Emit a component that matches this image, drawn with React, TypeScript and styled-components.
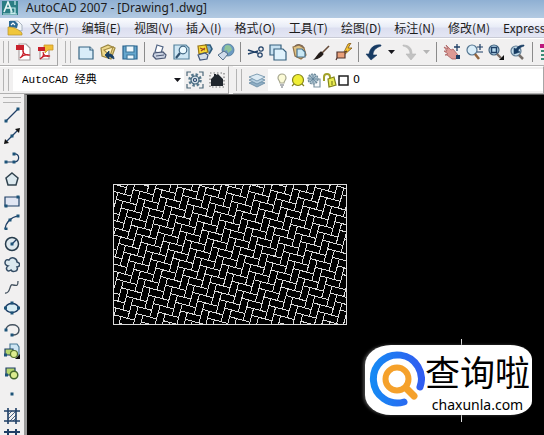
import React from 'react';
import styled, { createGlobalStyle } from 'styled-components';

const GlobalStyle = createGlobalStyle`
  * { box-sizing: border-box; }
  body { margin: 0; background: #000; }
  button, select { font: inherit; color: inherit; }
`;

const Window = styled.div`
  display: flex;
  flex-direction: column;
  height: 100vh;
  overflow: hidden;
  color: #1c1c1c;
  font: 12px/18px "Open Sans", "Noto Sans CJK SC", sans-serif;
`;

const TitleBar = styled.header`
  display: flex;
  align-items: center;
  gap: 8px;
  flex: none;
  height: 18px;
  padding-left: 2px;
  background: linear-gradient(#8fb0d3, #b3cae2);
  white-space: nowrap;
`;

const Title = styled.h1`
  margin: 0;
  padding-bottom: 2px;
  font: 400 12px/16px "Noto Sans", sans-serif;
`;

const MenuBar = styled.nav`
  display: flex;
  align-items: center;
  gap: 13px;
  flex: none;
  height: 20px;
  padding-left: 7px;
  background: linear-gradient(#fbfcfe, #e9edf7 45%, #dcdff0 55%, #e4e6f4);
  border-bottom: 1px solid #c9cbd6;
  overflow: hidden;
`;

const MenuItem = styled.button`
  flex: none;
  padding: 0;
  border: 0;
  background: none;
  font: 12px/18px "Noto Sans CJK SC", sans-serif;
  white-space: nowrap;
`;

const MenuLogo = styled.span`
  display: flex;
  flex: none;
  margin-right: -6px;
`;

const ToolRow = styled.div`
  display: flex;
  flex: none;
  gap: 4px;
  height: 28px;
  background: #f1f0f0;
  overflow: hidden;
`;

const Toolbar = styled.div<{ $grow?: boolean }>`
  display: flex;
  align-items: center;
  flex: ${p => (p.$grow ? '1 0 auto' : 'none')};
  border-right: 1px solid #a6a6a6;
  border-bottom: 1px solid #b0b0b0;
  border-top: 1px solid #fff;
`;

const Grip = styled.span<{ $across?: boolean }>`
  flex: none;
  align-self: ${p => (p.$across ? 'center' : 'stretch')};
  width: ${p => (p.$across ? '18px' : '6px')};
  height: ${p => (p.$across ? '6px' : 'auto')};
  margin: ${p => (p.$across ? '3px 0 4px' : '2px 4px 2px 3px')};
  border: 1px solid #b4b4b4;
  border-width: ${p => (p.$across ? '1px 0' : '0 1px')};
`;

const Separator = styled.span`
  flex: none;
  width: 1px;
  height: 20px;
  margin: 0 4px 0 3px;
  background: #8b8b8b;
`;

const ToolButton = styled.button<{ $narrow?: boolean }>`
  display: flex;
  align-items: center;
  justify-content: center;
  flex: none;
  width: ${p => (p.$narrow ? '13px' : '22px')};
  height: 22px;
  padding: 0;
  border: 0;
  background: none;
`;

const WorkspaceField = styled.label`
  position: relative;
  display: flex;
  align-items: center;
  width: 171px;
  height: 22px;
  background: #fff;
  svg { position: absolute; right: 3px; pointer-events: none; }
`;

const PlainSelect = styled.select<{ $mono?: boolean }>`
  appearance: none;
  flex: 1;
  width: 100%;
  height: 22px;
  padding: 0 0 0 ${p => (p.$mono ? '9px' : '4px')};
  border: 0;
  background: none;
  color: #000;
  font: 11px/20px ${p => (p.$mono ? '"Liberation Mono"' : '"DejaVu Sans"')}, "Noto Sans CJK SC", monospace;
`;

const LayerField = styled.div`
  display: flex;
  align-items: center;
  flex: 1;
  height: 22px;
  min-width: 265px;
  padding-left: 6px;
  background: #fff;
  svg { flex: none; }
`;

const Workspace = styled.main`
  display: flex;
  flex: 1;
  min-height: 0;
`;

const DrawTools = styled.nav`
  display: flex;
  flex-direction: column;
  align-items: center;
  flex: none;
  width: 24px;
  background: #f1f0f0;
  overflow: hidden;
`;

const DrawTool = styled.button`
  display: flex;
  flex: none;
  padding: 0;
  border: 0;
  margin-bottom: 5px;
  background: none;
  &:nth-of-type(even) { margin-bottom: 6px; }
`;

const Canvas = styled.section`
  position: relative;
  flex: 1;
  border-left: 3px solid #9a9a9a;
  border-top: 1px solid #555;
  background: #000;
  overflow: hidden;
`;

const Hatch = styled.svg`
  position: absolute;
  left: 86px;
  top: 89px;
`;

const Crosshair = styled.span`
  position: absolute;
  right: 82px;
  bottom: 13px;
  width: 1px;
  height: 83px;
  background: #ddd;
`;

const Brand = styled.div`
  position: absolute;
  right: 12px;
  bottom: 20px;
  display: flex;
  align-items: center;
  width: 167px;
  height: 70px;
  padding-left: 4px;
  background: #fff;
  border-radius: 26px 22px 22px 26px / 20px 14px 14px 20px;
  box-shadow: -2px 0 3px #444;
  color: #000;
`;

const BrandText = styled.div`
  display: flex;
  flex-direction: column;
  align-items: center;
`;

const BrandName = styled.strong`
  font: 400 35px/50px "Noto Sans CJK SC", sans-serif;
  white-space: nowrap;
`;

const BrandSite = styled.a`
  color: #000;
  font: 14px/18px "Noto Sans", sans-serif;
  text-decoration: none;
`;

const Svg = ({ children, size = 18 }: { children: React.ReactNode; size?: number }) => (
  <svg width={size} height={size} viewBox={`0 0 ${size} ${size}`} fill="none" stroke="#1f3f66" strokeWidth="1.2" aria-hidden="true">
    {children}
  </svg>
);

const icons: Record<string, React.ReactNode> = {
  pdf: <><path d="M4 1h7l4 4v12H4z" fill="#fff" stroke="#a9a0a0" /><path d="M1 2h8v5H1z" fill="#c8202b" stroke="none" /><path d="M5 15c3-2 4-6 3-8-1 3 3 6 7 5-4-1-8 1-10 3z" stroke="#c8202b" /></>,
  pdfNote: <><path d="M3 5h9v11H3z" fill="#fff" stroke="#a9a0a0" /><path d="M7 2h9v5h-5l-3 3V7H7z" fill="#f0bf35" stroke="#c9942a" strokeWidth=".8" /><path d="M1 4h7v4H1z" fill="#c8202b" stroke="none" /><path d="M3 16c3-2 4-5 3-7 0 3 3 5 7 4-4-1-8 1-10 3z" stroke="#c8202b" /></>,
  create: <><path d="M2 4h11l3 3v9H2z" fill="#d9edf9" stroke="#376583" /><path d="M13 4v3h3" fill="#fff" stroke="#376583" /></>,
  open: <><path d="M2 5l7-3 7 3-4 11-9-3z" fill="#eed98b" stroke="#9b8741" /><path d="M5 7l9-3-3 9z" fill="#fff4bf" stroke="#a78e45" /><path d="M15 16c0-3-2-5-5-5V8l-4 4 4 4v-3z" fill="#163e63" stroke="#163e63" strokeWidth=".8" /></>,
  save: <><path d="M2 3h14v13H2z" fill="#65a7ce" stroke="#28618b" /><path d="M5 3h8v6H5zM6 12h7v4H6z" fill="#eef8fd" stroke="#3f789c" /></>,
  print: <><path d="M6 2l6 2-2 6-6-1z" fill="#fff" stroke="#526685" /><path d="M3 10l9-1 3 3-1 3-9 1-3-3z" fill="#cbd3e3" stroke="#4c5975" /><path d="M5 13l8-1" stroke="#4c5975" /></>,
  preview: <><path d="M1 2h12l3 3v11H1z" fill="#cee7f4" stroke="#54829c" /><circle cx="10" cy="7" r="3.8" fill="#ecfaff" stroke="#426985" /><path d="M7 10l-4 5" stroke="#315370" strokeWidth="2.2" /></>,
  publish: <><path d="M10 2l5 0 2 4-3 5" fill="#7aaccb" stroke="#315c7c" strokeWidth="1.6" /><path d="M3 3l8-1 2 7-9 2z" fill="#f8db36" stroke="#987414" /><path d="M5 5l5 2M6 8l4-3" stroke="#a2481f" /><path d="M3 12l7-2 3 2-1 4-7 1z" fill="#d4deea" stroke="#40577b" /></>,
  globe: <><circle cx="11" cy="7" r="6" fill="#6c9ac3" stroke="#4b7697" strokeWidth=".8" /><path d="M8 3c4-3 7 1 7 4l-4 3-1-3-3 1z" fill="#8fc39a" stroke="none" /><path d="M1 12l6-4 4 3-5 6z" fill="#d0dceb" stroke="#4a657f" strokeWidth=".9" /></>,
  cut: <><path d="M1 7l10 3M1 11l10-3" strokeWidth="1.4" /><circle cx="14" cy="6" r="2.2" /><circle cx="13" cy="12" r="2.2" /></>,
  copy: <><path d="M1 2h11v10H1z" fill="#c7e1f1" stroke="#37617e" /><path d="M5 6h9l3 3v8H5z" fill="#dff2fc" stroke="#37617e" /></>,
  paste: <><path d="M2 4l6-2 5 3 2 7-5 4-6-3z" fill="#dfc283" stroke="#94744a" /><path d="M6 6h5l3 3v5H6z" fill="#cae9f5" stroke="#47718e" /><path d="M4 3c3-2 7-2 9 2" stroke="#7b6654" /></>,
  brush: <><path d="M16 3L8 11" stroke="#664b3a" strokeWidth="1.6" /><path d="M8 9l2 2c-2 3-4 4-8 5 2-2 3-5 6-7z" fill="#231c1a" stroke="#231c1a" /></>,
  match: <><path d="M9 9l4-8 3-1-3 5h4l-8 7z" fill="#f5c52f" stroke="#805517" strokeWidth=".8" /><path d="M2 9h8v6H2z" fill="#e99f79" stroke="#51342d" /><path d="M2 15l-1 2M10 9l2-1" stroke="#51342d" /></>,
  undo: <path d="M16 2C9 1 5 5 4 11H1l5 6 6-5H8c0-4 2-7 8-9z" fill="#173b63" stroke="#173b63" strokeWidth=".6" />,
  redo: <path d="M3 2c6 0 9 3 9 9h4l-5 6-5-6h4c0-4-2-7-7-8z" fill="#c2c2c2" stroke="#b7b7b7" strokeWidth=".6" />,
  pan: <><path d="M3 2l5 5 2-1 5 6-2 4H9l-5-4H2l3-1-4-3 3 0-3-4 4 2z" fill="#dd9a95" stroke="#a96161" strokeWidth=".8" /><path d="M14 1v7M11 4h6" strokeWidth="1.3" /><path d="M13 12h4v4h-4z" fill="#1f3f66" stroke="none" /></>,
  zoom: <><circle cx="7" cy="7" r="5" fill="#d9edf9" stroke="#557691" /><path d="M10 11l4 5" stroke="#92653e" strokeWidth="2.5" /><path d="M15 1v6M12 4h6M12 9h6" /></>,
  zoomWindow: <><circle cx="7" cy="7" r="5" fill="#b9dbee" stroke="#40617e" /><path d="M4.5 4.5h5v5h-5z" strokeWidth="1.5" /><path d="M10 11l4 4" stroke="#7a6c64" strokeWidth="2.3" /><path d="M17 12v5h-5z" fill="#111" stroke="none" /></>,
  zoomPrevious: <><circle cx="7" cy="8" r="5" fill="#c4ddeb" stroke="#617d95" /><path d="M10 12l4 4" stroke="#766e69" strokeWidth="2.5" /><path d="M15 2c-4 0-6 1-8 4L5 5v6l6-2-2-1c1-3 3-4 6-5z" fill="#163b62" stroke="#163b62" strokeWidth=".6" /></>,
  properties: <><path d="M1 1h16v4H1z" fill="#bd187b" stroke="none" /><path d="M2 8h14M2 12h14M2 16h14" stroke="#3c8b75" strokeWidth="2" /></>,
  gear: <><path d="M1 5V1h4M13 1h4v4M17 13v4h-4M5 17H1v-4" stroke="#4c687a" /><circle cx="9" cy="9" r="5.5" stroke="#57798d" strokeWidth="2.5" strokeDasharray="2.4 1.9" /><circle cx="9" cy="9" r="4" fill="#d6e1e8" stroke="#3d6077" /><circle cx="9" cy="9" r="1.5" fill="#fff" /></>,
  home: <><path d="M2 2h14v14H2z" stroke="#777" strokeDasharray="1.5 2" /><path d="M3 8l3-3V3h2v1l2-1 5 5v7H3z" fill="#20262d" stroke="none" /></>,
  layers: <><path d="M1 12l8-3 8 3-8 4z" fill="#8fadc3" stroke="#668aa3" strokeWidth=".8" /><path d="M1 9l8-3 8 3-8 4z" fill="#b7cfe0" stroke="#668aa3" strokeWidth=".8" /><path d="M1 6l8-3 8 3-8 4z" fill="#dceaf3" stroke="#668aa3" strokeWidth=".8" /></>,
  bulb: <><path d="M6 11c0-2-2-3-2-5a4 4 0 018 0c0 2-2 3-2 5z" fill="#fbfad6" stroke="#a6a68d" /><path d="M6 13h4M7 15h2" stroke="#666d75" /></>,
  sun: <><circle cx="8" cy="8" r="5.5" fill="#f0ee35" stroke="#85851e" /><path d="M2 14l2-2M14 14l-2-2" stroke="#85851e" /></>,
  freeze: <><path d="M8 7h6v8H8z" fill="#f6f9fb" stroke="#7e95a3" /><circle cx="7" cy="7" r="5" fill="#a9bfcc" stroke="#6b8798" strokeDasharray="2 1" /><path d="M7 3v8M3 7h8M4 4l6 6M10 4l-6 6" stroke="#5b7e95" strokeWidth=".7" /></>,
  lock: <><path d="M2 9V5a3 3 0 016 0v5" stroke="#a2a22a" strokeWidth="2" /><path d="M6 7l6-2 2 8-7 2z" fill="#e9ec52" stroke="#838520" /><path d="M10 9v4" stroke="#838520" /></>,
};

const dot = (x: number, y: number) => <rect x={x - 1.5} y={y - 1.5} width="3" height="3" fill="#1d5378" stroke="none" />;

const drawTools: [string, React.ReactNode][] = [
  ['Line', <><path d="M2 14L14 2" />{dot(2, 14)}{dot(14, 2)}</>],
  ['Construction line', <><path d="M2 14L14 2" /><path d="M0 16l1-5 4 4zM16 0l-1 5-4-4z" fill="#111" stroke="none" />{dot(8, 8)}</>],
  ['Polyline', <><path d="M2 12h9M10 4c6-1 6 7 1 8" />{dot(2, 12)}{dot(10, 12)}{dot(10, 4)}</>],
  ['Polygon', <path d="M8 2l6 5-2 7H4L2 7z" fill="#dce9ef" stroke="#30434f" strokeWidth="1.5" />],
  ['Rectangle', <><path d="M1 4h14v9H1z" fill="#e1e6f3" />{dot(2, 13)}{dot(14, 4)}</>],
  ['Arc', <><path d="M1 15C2 8 7 3 14 2" />{dot(2, 15)}{dot(6, 6)}{dot(14, 2)}</>],
  ['Circle', <><circle cx="8" cy="8" r="6.5" fill="#dde8ee" stroke="#263c4c" strokeWidth="1.5" /><path d="M8 8l4-4" />{dot(8, 8)}</>],
  ['Revision cloud', <path d="M4 9C-1 8 1 1 5 3c2-4 8-2 8 2 4 1 3 5 0 5 2 4-4 6-6 3-4 3-6-2-3-4z" fill="#dce9ef" stroke="#344d65" strokeWidth="1.5" />],
  ['Spline', <path d="M1 14c6 1 4-10 8-8 4 1 5 1 5-4" stroke="#44525f" strokeWidth="1.3" />],
  ['Ellipse', <><ellipse cx="8" cy="8" rx="6.5" ry="4.5" fill="#d7edf4" strokeWidth="1.5" />{dot(8, 3)}{dot(1.5, 8)}{dot(14.5, 8)}{dot(8, 13)}</>],
  ['Ellipse arc', <><path d="M2 8c0-7 13-7 13 0 0 4-4 5-6 5" stroke="#44525f" strokeWidth="1.5" />{dot(2, 8)}{dot(8, 13)}</>],
  ['Insert block', <><path d="M6 1h7l2 3v8H6z" fill="#cde5f3" stroke="#4d7d9a" /><path d="M1 6h8v6H1z" fill="#b4d56c" /><circle cx="10" cy="11" r="3.5" fill="#dcec8f" stroke="#56732c" />{dot(1.5, 12)}<path d="M16 11v5h-5z" fill="#111" stroke="none" /></>],
  ['Make block', <><path d="M2 3h9v7H2z" fill="#b4d56c" /><circle cx="10" cy="10" r="3.8" fill="#dcec8f" stroke="#45672d" strokeWidth="1.5" />{dot(2.5, 10)}</>],
  ['Point', dot(8, 8)],
  ['Hatch', <><path d="M4 0v16M12 0v16M0 3h16M0 13h16" strokeWidth="1.6" /><path d="M4 7l4-4M4 11l8-8M6 13l6-6M9 13l3-3" strokeWidth=".8" /></>],
  ['Gradient', <path d="M4 0v16M12 0v16M0 3h16M0 13h16" strokeWidth="2" />],
];

const Tool = ({ name }: { name: string }) => (
  <ToolButton type="button" aria-label={name}><Svg>{icons[name]}</Svg></ToolButton>
);

const DropArrow = ({ faded }: { faded?: boolean }) => (
  <svg width="7" height="4" viewBox="0 0 7 4" aria-hidden="true"><path d="M0 0h7L3.5 4z" fill={faded ? '#b5b5b5' : '#16161c'} /></svg>
);

const Tools = ({ names }: { names: string[] }) => <>{names.map(n => <Tool key={n} name={n} />)}</>;

const menus = ['文件(F)', '编辑(E)', '视图(V)', '插入(I)', '格式(O)', '工具(T)', '绘图(D)', '标注(N)', '修改(M)', 'Express'];

const BRICK = 7;
const REACH = 44;

// One horizontal and one vertical 2:1 brick, repeated on the herringbone lattice (1,1), (2,-2).
const bricks = (() => {
  let path = '';
  for (let y = -REACH; y < REACH; y++) {
    for (let x = -REACH; x < REACH; x++) {
      if ((((x - y) % 4) + 4) % 4 === 0) path += `M${x} ${y + 1}V${y}h2M${x + 2} ${y + 1}v-2h1`;
    }
  }
  return path;
})();

const HerringboneHatch = () => (
  <Hatch width="235" height="142" viewBox="0 0 235 142" role="img" aria-label="Herringbone hatch">
    <clipPath id="hatchArea"><rect width="234" height="141" /></clipPath>
    <g clipPath="url(#hatchArea)">
      <path d={bricks} transform={`rotate(15) scale(${BRICK})`} fill="none" stroke="#dadada" strokeWidth={1 / BRICK} shapeRendering="crispEdges" />
    </g>
    <rect x=".5" y=".5" width="233" height="140" fill="none" stroke="#dcdcdc" />
  </Hatch>
);

export default function App() {
  return (
    <Window>
      <GlobalStyle />
      <TitleBar>
        <Svg size={16}>
          <path d="M0 0h16v14H0z" fill="#2b7d84" stroke="none" />
          <path d="M2 11L6 1l4 10M4 7h4" stroke="#e9f6f5" strokeWidth="1.6" />
          <path d="M9 7h4v5H9zM13 0v4M1 13h14" stroke="#c9eeee" />
        </Svg>
        <Title>AutoCAD 2007 - [Drawing1.dwg]</Title>
      </TitleBar>
      <MenuBar>
        <MenuLogo>
          <Svg size={16}>
            <path d="M3 1h8l4 4v6L3 9z" fill="#f0f4f8" stroke="#8a98a6" strokeWidth=".7" />
            <path d="M2 1h6l3 3-1 4-8-1z" fill="#2c6a94" stroke="none" />
            <path d="M1 7c6 0 10 2 14 6v2H1z" fill="#f0c63c" stroke="#b48f2e" strokeWidth=".7" />
            <path d="M4 5l2-2 2 2" stroke="#fff" />
          </Svg>
        </MenuLogo>
        {menus.map(m => <MenuItem type="button" key={m}>{m}</MenuItem>)}
      </MenuBar>
      <ToolRow>
        <Toolbar>
          <Grip />
          <Tools names={['pdf', 'pdfNote']} />
        </Toolbar>
        <Toolbar $grow>
          <Grip />
          <Tools names={['create', 'open', 'save']} />
          <Separator />
          <Tools names={['print', 'preview', 'publish', 'globe']} />
          <Separator />
          <Tools names={['cut', 'copy', 'paste', 'brush', 'match']} />
          <Separator />
          <Tool name="undo" />
          <ToolButton type="button" $narrow aria-label="Undo list"><DropArrow /></ToolButton>
          <Tool name="redo" />
          <ToolButton type="button" $narrow aria-label="Redo list"><DropArrow faded /></ToolButton>
          <Separator />
          <Tools names={['pan', 'zoom', 'zoomWindow', 'zoomPrevious']} />
          <Separator />
          <Tool name="properties" />
        </Toolbar>
      </ToolRow>
      <ToolRow>
        <Toolbar>
          <Grip />
          <WorkspaceField>
            <PlainSelect $mono aria-label="Workspace"><option>AutoCAD 经典</option></PlainSelect>
            <DropArrow />
          </WorkspaceField>
          <Tools names={['gear', 'home']} />
        </Toolbar>
        <Toolbar $grow>
          <Grip />
          <Tool name="layers" />
          <LayerField>
            <Svg size={16}>{icons.bulb}</Svg>
            <Svg size={16}>{icons.sun}</Svg>
            <Svg size={16}>{icons.freeze}</Svg>
            <Svg size={16}>{icons.lock}</Svg>
            <svg width="11" height="11" viewBox="0 0 11 11" aria-hidden="true"><path d="M1 1h9v9H1z" fill="#fff" stroke="#222" strokeWidth="1.5" /></svg>
            <PlainSelect aria-label="Layer"><option>0</option></PlainSelect>
          </LayerField>
        </Toolbar>
      </ToolRow>
      <Workspace>
        <DrawTools>
          <Grip $across />
          {drawTools.map(([name, art]) => (
            <DrawTool type="button" key={name} aria-label={name}><Svg size={16}>{art}</Svg></DrawTool>
          ))}
        </DrawTools>
        <Canvas>
          <HerringboneHatch />
          <Crosshair />
          <Brand>
            <svg width="56" height="58" viewBox="0 0 56 58" fill="none" aria-hidden="true">
              <defs>
                <linearGradient id="ring" x1="0" x2="1"><stop stopColor="#1689f4" /><stop offset="1" stopColor="#315df0" /></linearGradient>
              </defs>
              <path d="M51 36A24 24 0 1 0 35 51" stroke="url(#ring)" strokeWidth="7" strokeLinecap="round" />
              <circle cx="28" cy="28" r="11.5" stroke="#f5a12b" strokeWidth="6" />
              <path d="M37 37l8 8" stroke="#f5a12b" strokeWidth="7" strokeLinecap="round" />
            </svg>
            <BrandText>
              <BrandName>查询啦</BrandName>
              <BrandSite href="#">chaxunla.com</BrandSite>
            </BrandText>
          </Brand>
        </Canvas>
      </Workspace>
    </Window>
  );
}
